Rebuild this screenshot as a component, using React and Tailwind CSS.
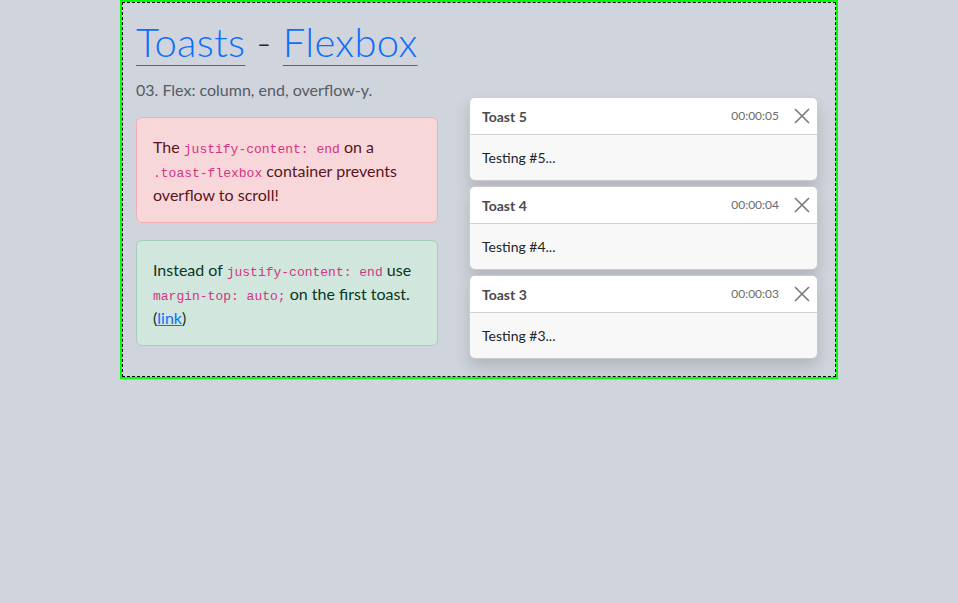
const toasts = [5, 4, 3]

const sans = { fontFamily: 'Lato, "Noto Sans", sans-serif' }

function Code({ children }) {
  return (
    <code className="text-[13px] leading-none text-[#d63384] font-['Liberation_Mono',monospace]">{children}</code>
  )
}

// plain X like bootstrap's btn-close, drawn to the reference size
function CloseIcon() {
  return (
    <svg width="16" height="16" viewBox="0 0 16 16" fill="none" stroke="currentColor" strokeWidth="1.6">
      <path d="M1 1L15 15M15 1L1 15" />
    </svg>
  )
}

function Toast({ n }) {
  return (
    <div className="w-[349px] rounded-[6px] border border-[rgba(0,0,0,0.18)] bg-[#f8f8f8] shadow-[0_8px_16px_rgba(0,0,0,0.15)] overflow-hidden">
      <div className="flex items-center h-[37px] pl-3 pr-[7px] bg-white border-b border-[rgba(0,0,0,0.18)]">
        <strong className="text-[14px] font-bold text-[#4a4a4a] mr-auto">Toast {n}</strong>
        <small className="text-[12px] text-[#6c6c6c]">00:00:0{n}</small>
        <button className="ml-[15px] text-[#7a7a7a]">
          <CloseIcon />
        </button>
      </div>
      <div className="h-[45px] flex items-center px-3 text-[14px] text-[#212529]">
        Testing #{n}...
      </div>
    </div>
  )
}

export default function App() {
  return (
    <div className="min-h-screen bg-[#d0d4dc]" style={sans}>
      <div className="mx-auto w-[718px] h-[379px] border-2 border-[#00ff00]">
        <div className="h-full border border-dashed border-black pl-[13px] pr-3 pt-[15px]">
          <h1 className="text-[40px] leading-[48px] font-light tracking-[0.3px] text-[#212529]">
            <a href="#" className="text-[#0d6efd] underline decoration-1 underline-offset-[8px]">Toasts</a>
            {' - '}
            <a href="#" className="text-[#0d6efd] underline decoration-1 underline-offset-[8px]">Flexbox</a>
          </h1>
          <p className="mt-[12px] text-[16px] leading-[24px] text-[#555c63]">03. Flex: column, end, overflow-y.</p>
          <div className="flex items-start">
            <div className="w-[302px] pt-[15px] flex flex-col gap-[17px]">
              <div className="rounded-[6px] border border-[#f1aeb5] bg-[#f8d7da] px-4 pt-[17px] pb-[15px] text-[16px] leading-[24px] text-[#58151c]">
                The <Code>justify-content: end</Code> on a <Code>.toast-flexbox</Code> container prevents overflow to scroll!
              </div>
              <div className="rounded-[6px] border border-[#a3cfbb] bg-[#d1e7dd] px-4 pt-[17px] pb-[15px] text-[16px] leading-[24px] text-[#0a3622]">
                Instead of <Code>justify-content: end</Code> use <Code>margin-top: auto;</Code> on the first toast. (<a href="#" className="text-[#0d6efd] underline">link</a>)
              </div>
            </div>
            <div className="ml-[31px] -mt-[5px] flex flex-col gap-[5px]">
              {toasts.map(n => <Toast key={n} n={n} />)}
            </div>
          </div>
        </div>
      </div>
    </div>
  )
}
